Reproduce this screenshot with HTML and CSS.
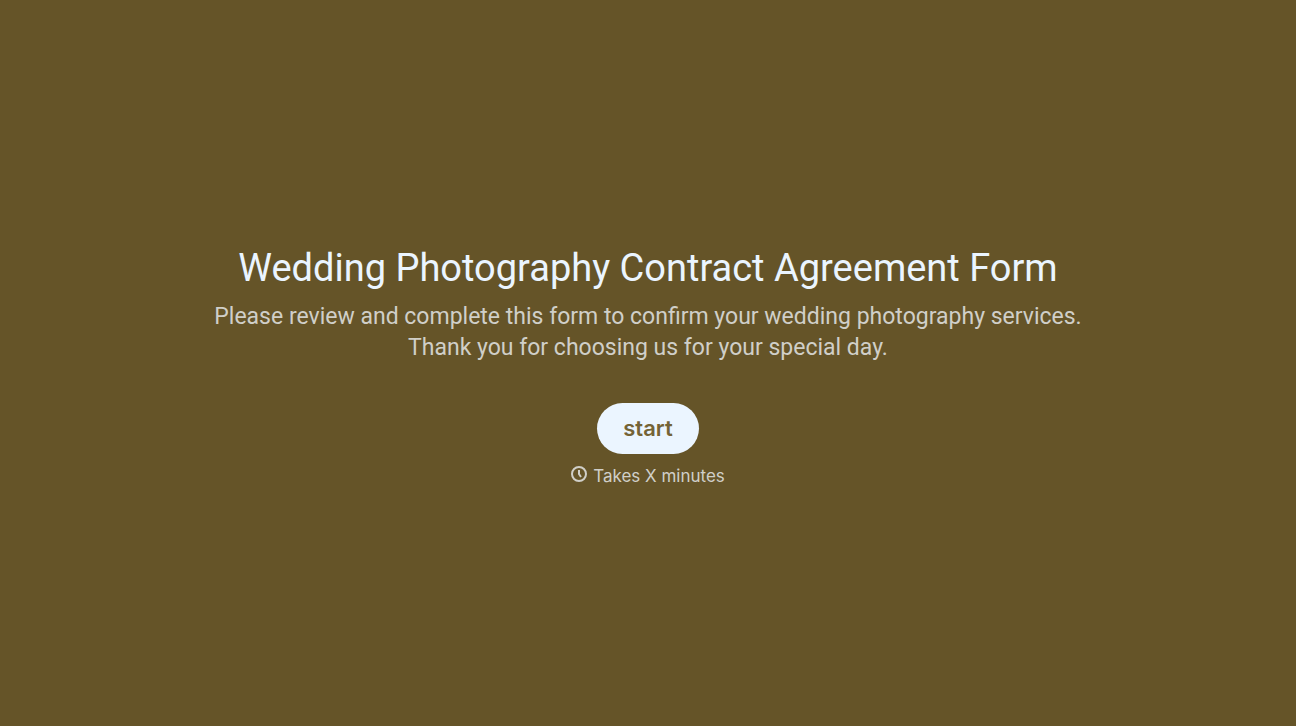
FILE: index.html
```html
<!DOCTYPE html>
<html lang="en">
<head>
<meta charset="utf-8">
<title>Wedding Photography Contract Agreement Form</title>
<link rel="stylesheet" href="styles.css">
</head>
<body>
<main class="welcome">
  <h1 class="title">Wedding Photography Contract Agreement Form</h1>
  <p class="description">Please review and complete this form to confirm your wedding photography services.<br>Thank you for choosing us for your special day.</p>
  <button class="start" type="button">start</button>
  <p class="duration">
    <svg class="clock" viewBox="0 0 16 16" aria-hidden="true"><circle cx="8" cy="8" r="7"/><path d="M8 4v4l2 3"/></svg>
    <span>Takes X minutes</span>
  </p>
</main>
</body>
</html>
```

FILE: styles.css
```css
body {
  margin: 0;
  background: #655428;
  color: #ebf5ff;
  font-family: Roboto, "Liberation Sans", sans-serif;
}
.welcome {
  min-height: 100vh;
  box-sizing: border-box;
  padding: 6px 24px 0;
  display: flex;
  flex-direction: column;
  align-items: center;
  justify-content: center;
  text-align: center;
}
.title {
  margin: 0;
  font-size: 38px;
  line-height: 50px;
  font-weight: 400;
}
.description {
  margin: 8px 0 0;
  font-size: 23px;
  line-height: 31px;
  color: #d0cfc8;
}
.start {
  margin-top: 40px;
  padding: 0 26px;
  height: 51px;
  border: 0;
  border-radius: 26px;
  background: #ebf5ff;
  color: #746336;
  font-family: Inter, sans-serif;
  font-size: 22px;
  font-weight: 600;
}
.duration {
  margin: 8px 0 0;
  display: flex;
  align-items: center;
  gap: 6px;
  font-family: Inter, sans-serif;
  font-size: 17px;
  line-height: 28px;
  color: #d0cfc8;
}
.clock {
  width: 16px;
  height: 16px;
  margin-bottom: 3px;
  fill: none;
  stroke: currentColor;
  stroke-width: 2;
}
```
